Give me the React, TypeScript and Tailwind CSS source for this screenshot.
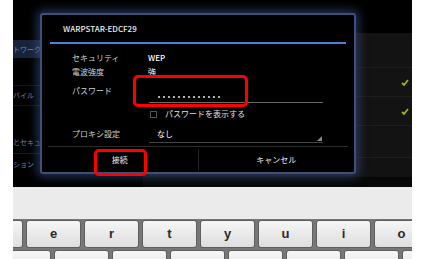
import React from 'react';

const jp = { fontFamily: '"Noto Sans CJK JP", "Noto Sans", sans-serif' };

const row1 = ['w', 'e', 'r', 't', 'y', 'u', 'i', 'o'];
const row2 = ['a', 's', 'd', 'f', 'g', 'h', 'j', 'k'];

function Key({ label }: { label: string }) {
  return (
    <div className="w-[55px] shrink-0 h-full rounded-[3px] bg-gradient-to-b from-[#f6f6f6] to-[#dedede] border border-[#5e5e5e] flex items-center justify-center text-[13px] font-bold text-[#2a2a2a]">
      {label}
    </div>
  );
}

function Check() {
  return (
    <svg width="8" height="7" viewBox="0 0 8 7">
      <path d="M1 4 L3 6 L7 1" stroke="#9cb320" strokeWidth="1.8" fill="none" />
    </svg>
  );
}

function Background() {
  return (
    <div className="absolute inset-0 flex">
      <div className="w-[130px] flex flex-col text-[7px] text-[#7686a0]">
        <div className="h-[40px]" />
        <div className="h-[18px] bg-[#18233a] flex items-center">トワーク設定</div>
        <div className="h-[28px] border-b border-[#151515]" />
        <div className="h-[20px] flex items-center border-b border-[#151515]">バイル</div>
        <div className="h-[25px]" />
        <div className="h-[23px] flex items-center border-b border-[#1a1a1a]">とセキュリティ</div>
        <div className="h-[20px] flex items-center">ション</div>
      </div>
      <div className="flex-1 flex flex-col">
        <div className="h-[33px] bg-black" />
        <div className="h-[35px] bg-[#131313] border-b border-[#1e1e1e]" />
        <div className="h-[29px] bg-[#131313] border-b border-[#1e1e1e] flex items-center justify-end pr-[3px]">
          <Check />
        </div>
        <div className="h-[29px] bg-[#131313] border-b border-[#1e1e1e] flex items-center justify-end pr-[3px]">
          <Check />
        </div>
        <div className="h-[32px] bg-[#131313] border-b border-[#1e1e1e]" />
        <div className="h-[19px] bg-[#121212]" />
        <div className="flex-1 bg-[#070707]" />
      </div>
    </div>
  );
}

function Dialog() {
  return (
    <div className="absolute left-[27px] top-[13px] w-[316px] h-[161px] bg-black border-2 border-[#3e5079] rounded-[3px] shadow-[0_0_10px_3px_rgba(60,90,150,0.55)] flex flex-col">
      <div className="h-[27px] pl-[21px] flex items-center text-[8px] font-medium text-[#ececec]">
        WARPSTAR-EDCF29
      </div>
      <div className="h-[2px] mx-[8px] bg-[#4f7fd8]" />
      <div className="pl-[30px] pt-[7px] flex flex-col text-[8px] text-[#cfcfcf]">
        <div className="h-[14px] flex items-center">
          <span className="w-[76px]">セキュリティ</span>
          <span className="text-white font-medium">WEP</span>
        </div>
        <div className="h-[14px] flex items-center">
          <span className="w-[76px]">電波強度</span>
          <span className="text-white">強</span>
        </div>
        <div className="h-[24px] flex items-center">
          <span className="w-[77px]">パスワード</span>
          <div className="w-[174px] h-full flex flex-col justify-end">
            <div className="flex gap-[3px] pl-[9px] pb-[4px]">
              {Array.from({ length: 13 }).map((_, i) => (
                <div key={i} className="w-[2px] h-[2px] rounded-full bg-[#e8e8e8]" />
              ))}
            </div>
            <div className="h-px bg-[#6a6a6a]" />
          </div>
        </div>
        <div className="h-[18px] flex items-center pl-[78px] pt-[4px]">
          <div className="w-[7px] h-[7px] border border-[#555] mr-[8px]" />
          <span className="text-[#e0e0e0]">パスワードを表示する</span>
        </div>
        <div className="h-[22px] flex items-center pt-[3px]">
          <span className="w-[77px]">プロキシ設定</span>
          <div className="w-[174px] h-full flex flex-col justify-end relative">
            <span className="pl-[8px] pb-[2px] text-white">なし</span>
            <div className="h-px bg-[#444]" />
            <svg className="absolute right-[1px] bottom-[2px]" width="5" height="5" viewBox="0 0 5 5">
              <path d="M5 0 L5 5 L0 5 Z" fill="#8a8a8a" />
            </svg>
          </div>
        </div>
      </div>
      <div className="mt-auto mx-[6px] h-px bg-[#2c2c2c]" />
      <div className="h-[25px] flex items-center text-[8px] text-[#ededed]">
        <div className="flex-1 text-center">接続</div>
        <div className="w-px h-[20px] bg-[#262626]" />
        <div className="flex-1 text-center">キャンセル</div>
      </div>
    </div>
  );
}

export default function App() {
  return (
    <div className="w-[425px] h-[259px] bg-white overflow-hidden flex" style={jp}>
      <div className="w-[13px] shrink-0" />
      <div className="w-[399px] shrink-0 flex flex-col">
        <div className="h-[187px] shrink-0 bg-black relative overflow-hidden">
          <Background />
          <Dialog />
          <div className="absolute left-[120px] top-[75px] w-[115px] h-[32px] border-[3px] border-[#f00] rounded-[5px]" />
          <div className="absolute left-[81px] top-[149px] w-[53px] h-[27px] border-[3px] border-[#f00] rounded-[5px]" />
        </div>
        <div className="h-[72px] shrink-0 bg-[#ebebeb] flex flex-col overflow-hidden" style={{ fontFamily: '"Liberation Sans", sans-serif' }}>
          <div className="h-[32px] shrink-0" />
          <div className="shrink-0 bg-[#777] pt-[1px] flex flex-col gap-[2px]">
            <div className="h-[28px] shrink-0 flex gap-[3px] ml-[-45px]">
              {row1.map((k) => (
                <Key key={k} label={k} />
              ))}
            </div>
            <div className="h-[30px] shrink-0 flex gap-[3px] ml-[-17px]">
              {row2.map((k) => (
                <Key key={k} label={k} />
              ))}
            </div>
          </div>
        </div>
      </div>
      <div className="flex-1" />
    </div>
  );
}
